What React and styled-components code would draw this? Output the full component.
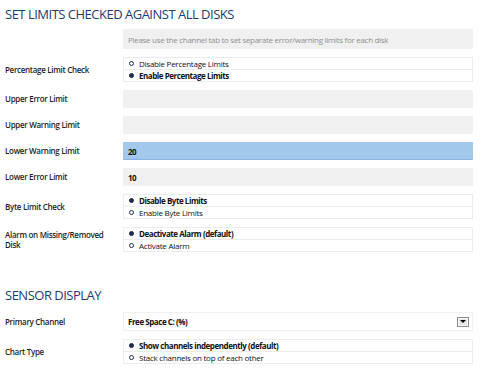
import React from "react";
import styled, { createGlobalStyle } from "styled-components";

const Global = createGlobalStyle`
  html, body { margin: 0; padding: 0; background: #fff; }
  body { font-family: "Open Sans", "Noto Sans", sans-serif; color: #222; }
`;

const Page = styled.div`
  width: 493px;
  padding: 5px 0 0 5px;
  box-sizing: border-box;
`;

const Section = styled.section`
  margin-bottom: ${(p) => p.$after || 0}px;
`;

const Title = styled.h2`
  margin: 0;
  font-size: 13px;
  font-weight: 400;
  color: #1d3b6e;
  line-height: 18px;
  letter-spacing: -0.5px;
  margin-bottom: ${(p) => p.$gap}px;
`;

const Grid = styled.div`
  display: grid;
  grid-template-columns: 118px 350px;
  row-gap: 8px;
  align-items: center;
`;

const Label = styled.div`
  font-size: 8px;
  font-weight: 600;
  color: #1e1e1e;
  line-height: 10px;
  letter-spacing: -0.3px;
  padding-right: 6px;
`;

const Field = styled.div`
  height: ${(p) => p.$h || 18}px;
  box-sizing: border-box;
  background: ${(p) => (p.$active ? "#a2c8ec" : p.$white ? "#fff" : "#f0f0f0")};
  border: 1px solid ${(p) => (p.$active ? "#a2c8ec" : "#f0f0f0")};
  ${(p) => p.$active && "border-bottom-color: #8ab4de;"}
  display: flex;
  align-items: center;
  padding: 0 4px;
  font-size: 8px;
  letter-spacing: ${(p) => (p.$muted ? "-0.3px" : "-0.45px")};
  font-weight: ${(p) => (p.$muted ? 400 : 700)};
  color: ${(p) => (p.$muted ? "#8f8f8f" : "#111")};
`;

const SelectBox = styled(Field)`
  justify-content: space-between;
  padding-right: 3px;
`;

const DropButton = styled.div`
  width: 12px;
  height: 10px;
  box-sizing: border-box;
  border: 1px solid #8a8a8a;
  background: #e6e6e6;
  box-shadow: inset 0 0 0 1px #fafafa;
  display: flex;
  align-items: center;
  justify-content: center;
  &::after {
    content: "";
    border-left: 3px solid transparent;
    border-right: 3px solid transparent;
    border-top: 3px solid #000;
  }
`;

const RadioGroup = styled.div`
  border: 1px solid #ececec;
  display: flex;
  flex-direction: column;
`;

const Option = styled.div`
  height: 11px;
  display: flex;
  align-items: center;
  gap: 5px;
  padding-left: 5px;
  font-size: 8px;
  letter-spacing: ${(p) => (p.$on ? "-0.45px" : "-0.25px")};
  font-weight: ${(p) => (p.$on ? 700 : 400)};
  color: #111;
  & + & { border-top: 1px solid #ececec; }
`;

const Dot = styled.span`
  width: 5px;
  height: 5px;
  box-sizing: border-box;
  border-radius: 50%;
  border: 1px solid #1d2a4a;
  background: ${(p) => (p.$on ? "#1d2a4a" : "#fff")};
  flex: none;
`;

function Radios({ options, value }) {
  return (
    <RadioGroup>
      {options.map((o, i) => (
        <Option key={o} $on={i === value}>
          <Dot $on={i === value} />
          {o}
        </Option>
      ))}
    </RadioGroup>
  );
}

export default function App() {
  return (
    <Page>
      <Global />
      <Section $after={34}>
        <Title $gap={6}>SET LIMITS CHECKED AGAINST ALL DISKS</Title>
        <Grid>
          <div />
          <Field $h={20} $muted>
            Please use the channel tab to set separate error/warning limits for each disk
          </Field>
          <Label>Percentage Limit Check</Label>
          <Radios options={["Disable Percentage Limits", "Enable Percentage Limits"]} value={1} />
          <Label>Upper Error Limit</Label>
          <Field />
          <Label>Upper Warning Limit</Label>
          <Field />
          <Label>Lower Warning Limit</Label>
          <Field $active>20</Field>
          <Label>Lower Error Limit</Label>
          <Field>10</Field>
          <Label>Byte Limit Check</Label>
          <Radios options={["Disable Byte Limits", "Enable Byte Limits"]} value={0} />
          <Label>Alarm on Missing/Removed Disk</Label>
          <Radios options={["Deactivate Alarm (default)", "Activate Alarm"]} value={0} />
        </Grid>
      </Section>
      <Section>
        <Title $gap={8}>SENSOR DISPLAY</Title>
        <Grid>
          <Label>Primary Channel</Label>
          <SelectBox $white $h={19}>
            Free Space C: (%)
            <DropButton />
          </SelectBox>
          <Label>Chart Type</Label>
          <Radios
            options={["Show channels independently (default)", "Stack channels on top of each other"]}
            value={0}
          />
        </Grid>
      </Section>
    </Page>
  );
}
